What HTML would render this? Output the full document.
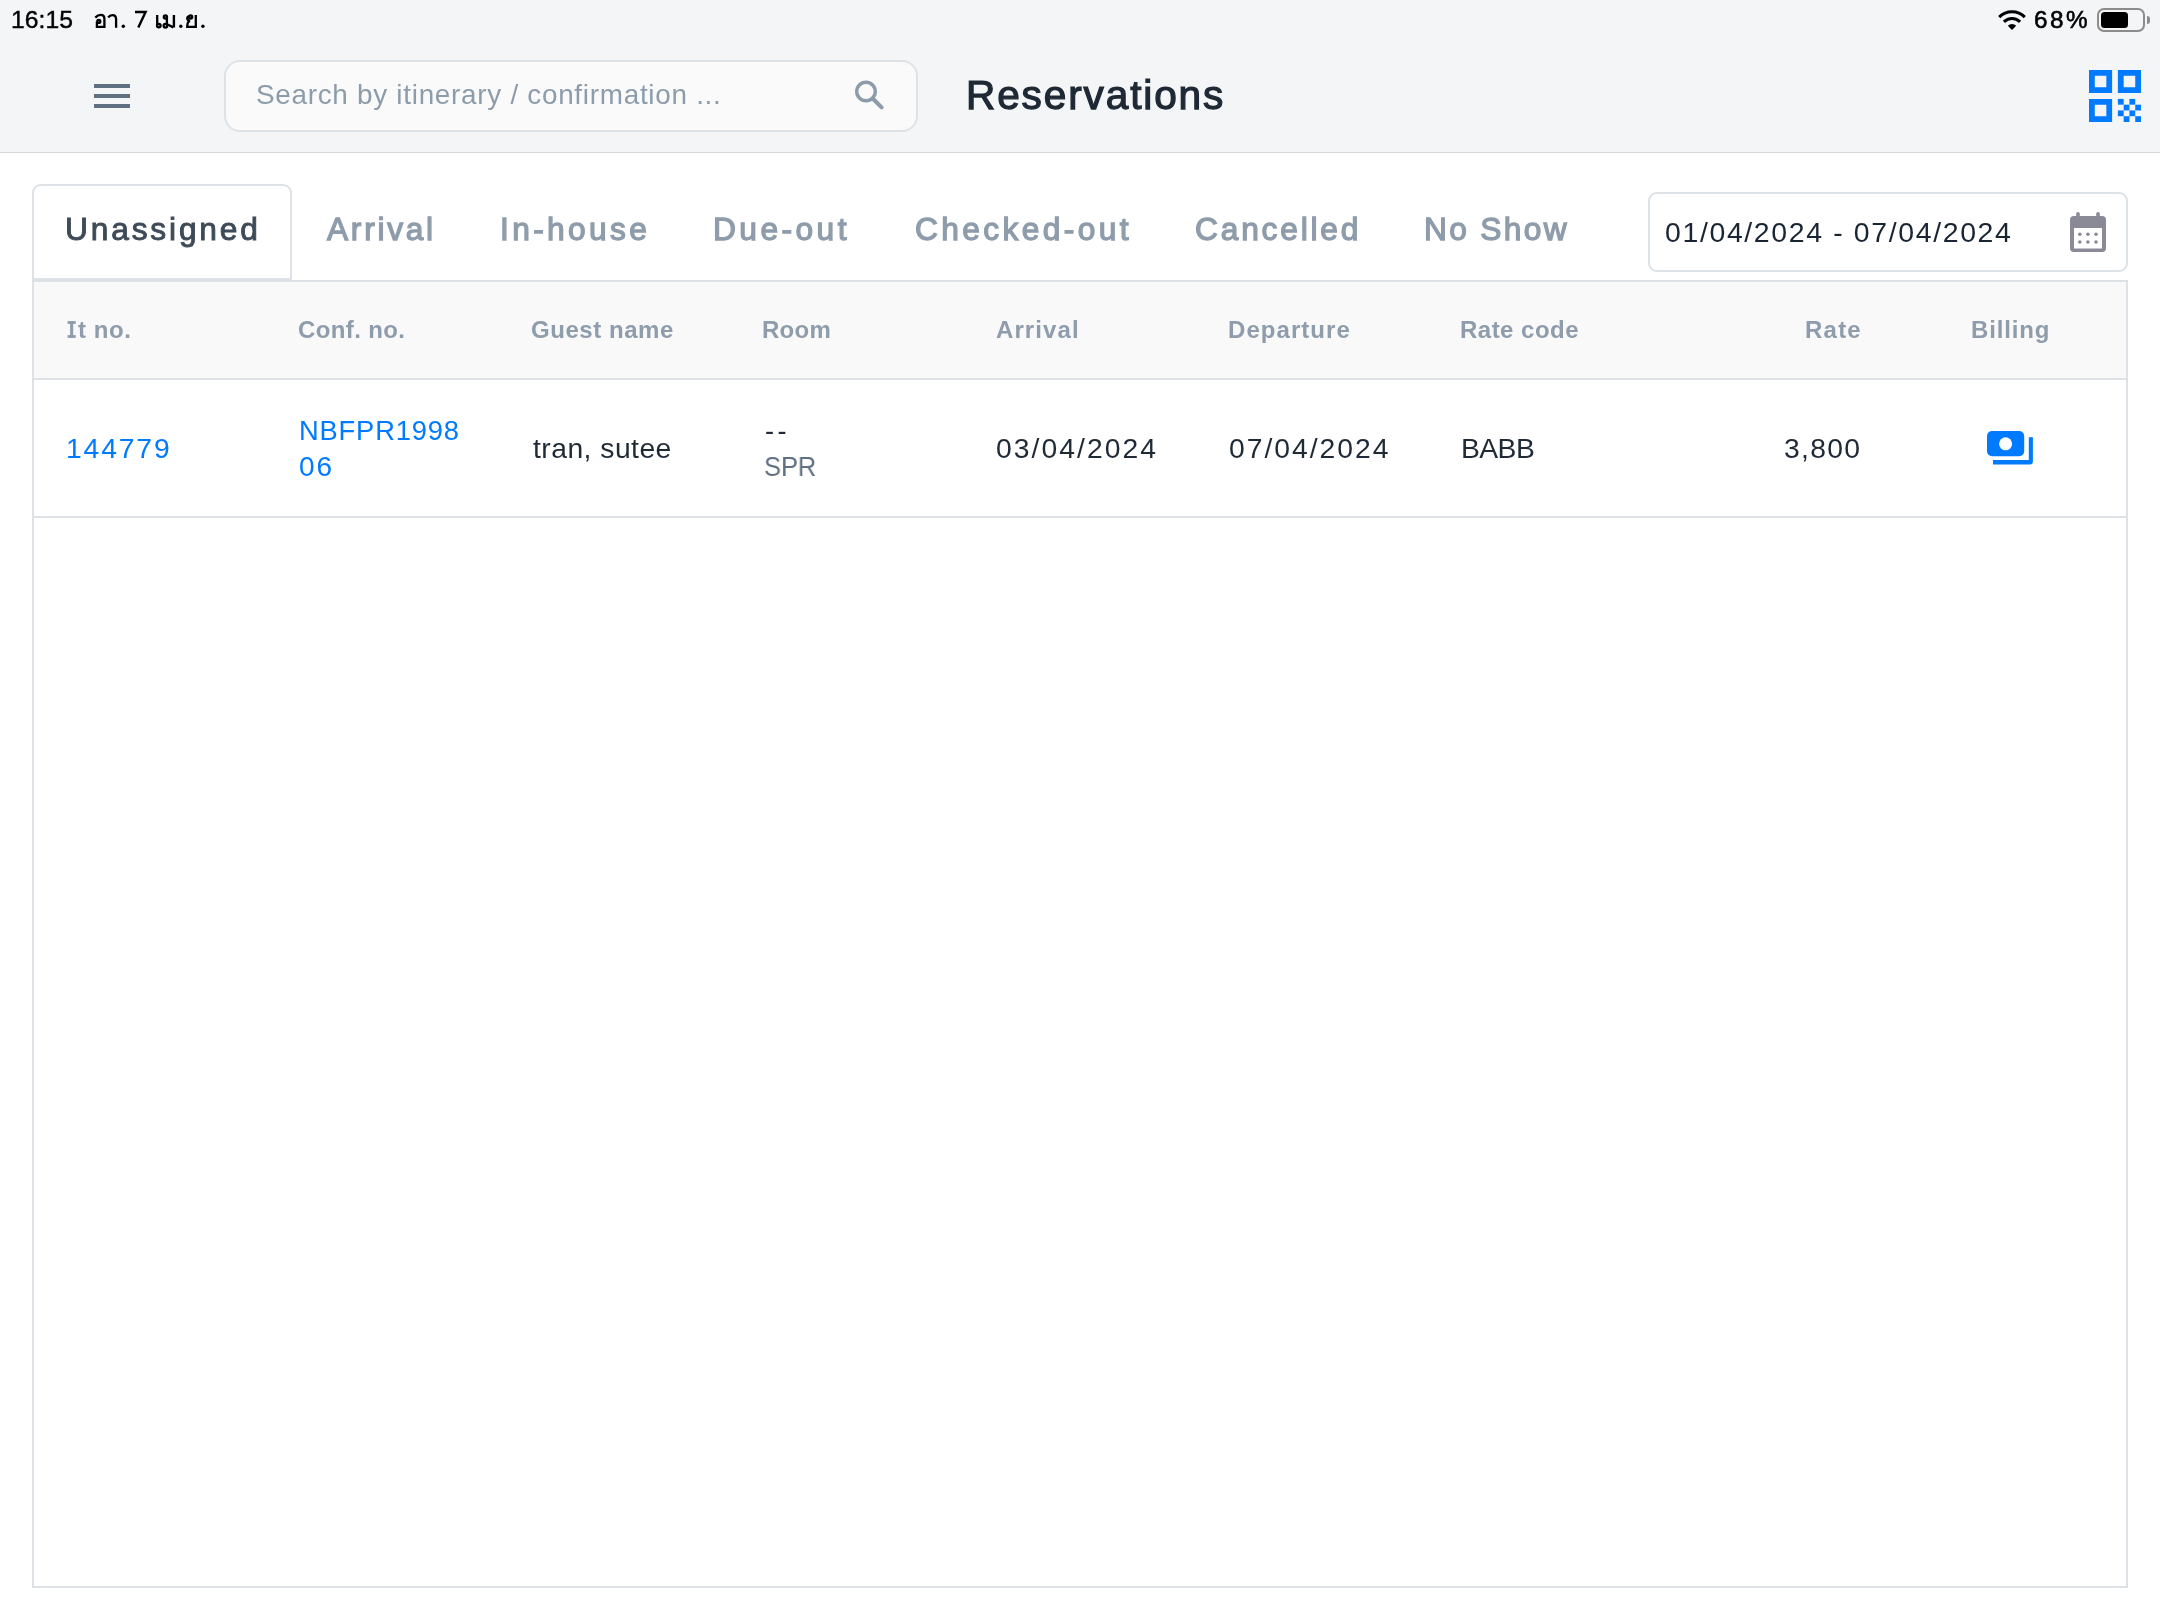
<!DOCTYPE html>
<html><head><meta charset="utf-8"><title>Reservations</title><style>
html,body{margin:0;padding:0;width:2160px;height:1620px;overflow:hidden;background:#fff;font-family:"Liberation Sans",sans-serif}
.t{position:absolute;white-space:pre;line-height:1;will-change:transform}
.a{position:absolute;box-sizing:border-box}
</style></head><body>
<div class="a" style="left:0;top:0;width:2160px;height:152px;background:#f4f5f7"></div>
<div class="a" style="left:0;top:152px;width:2160px;height:1px;background:#d5d7d9"></div>
<div class="a" style="left:94px;top:84px;width:36px;height:4px;background:#617080"></div>
<div class="a" style="left:94px;top:94px;width:36px;height:4px;background:#617080"></div>
<div class="a" style="left:94px;top:104px;width:36px;height:4px;background:#617080"></div>
<div class="a" style="left:224px;top:60px;width:694px;height:72px;border:2px solid #dde2e7;border-radius:16px;background:#fafafa"></div>
<svg class="a" style="left:850px;top:75px" width="40" height="40" viewBox="850 75 40 40"><circle cx="866" cy="91.5" r="9.3" fill="none" stroke="#8d9cab" stroke-width="3.4"/><line x1="873.2" y1="99" x2="881.6" y2="107.4" stroke="#8d9cab" stroke-width="4.1" stroke-linecap="round"/></svg>
<svg class="a" style="left:2089px;top:70px" width="52" height="52" viewBox="0 0 52 52" fill="#007aff"><path d="M0.00 0.00h23.11v23.11h-23.11z M5.78 5.78v11.56h11.56v-11.56z" fill-rule="evenodd"/><path d="M28.89 0.00h23.11v23.11h-23.11z M34.67 5.78v11.56h11.56v-11.56z" fill-rule="evenodd"/><path d="M0.00 28.89h23.11v23.11h-23.11z M5.78 34.67v11.56h11.56v-11.56z" fill-rule="evenodd"/><rect x="28.89" y="28.89" width="5.78" height="5.78"/><rect x="40.44" y="28.89" width="5.78" height="5.78"/><rect x="34.67" y="34.67" width="5.78" height="5.78"/><rect x="46.22" y="34.67" width="5.78" height="5.78"/><rect x="28.89" y="40.44" width="5.78" height="5.78"/><rect x="40.44" y="40.44" width="5.78" height="5.78"/><rect x="34.67" y="46.22" width="5.78" height="5.78"/><rect x="46.22" y="46.22" width="5.78" height="5.78"/></svg>
<div class="t" style="left:10.7px;top:8.0px;font-size:24.71px;font-weight:400;letter-spacing:0.025px;color:#000;-webkit-text-stroke:0.40px #000;">16:15</div>

<div class="t" style="left:2034.3px;top:8.0px;font-size:24.29px;font-weight:400;letter-spacing:2.450px;color:#000;-webkit-text-stroke:0.60px #000;">68%</div>

<svg class="a" style="left:0;top:0" width="220" height="40" viewBox="0 0 220 40" fill="none" stroke="#000" stroke-width="2.3">
<path d="M95.3 17.6 C97.5 15.2 99.5 14.9 100.8 14.9 C103.2 14.9 104.4 16.6 104.4 18.8 V26.9 H96.9 V21.6"/>
<circle cx="98.8" cy="21.4" r="1.5"/>
<path d="M108.2 17.5 C109.6 15.5 111 15.1 112.4 15.1 C114.9 15.1 116.1 16.9 116.1 19.2 V27.8"/>
<path d="M135 12 H145.6 L138.3 27.4" stroke-width="2.4"/>
<path d="M157.2 15 V25.2"/><circle cx="158.8" cy="25.6" r="1.8"/>
<circle cx="165.4" cy="16.9" r="1.6"/><path d="M166.9 17.8 V25.7"/><circle cx="165.4" cy="25.7" r="1.8"/>
<path d="M167 24.2 L173.4 27.4 M173.9 15 V27.4" stroke-width="2.4"/>
<path d="M186.1 26.9 H195.8 V15"/>
<circle cx="190.6" cy="16.9" r="1.6"/>
<path d="M189 16 C186.5 17 186.5 20.6 190 20.8 C187.2 21.5 187.2 24.5 187.3 26.9" />
</svg>
<svg class="a" style="left:0;top:0" width="220" height="40" viewBox="0 0 220 40" fill="#000"><circle cx="123.3" cy="26.3" r="1.7"/><circle cx="180.8" cy="26.3" r="1.7"/><circle cx="202.9" cy="26.3" r="1.7"/></svg>
<svg class="a" style="left:1990px;top:0" width="40" height="40" viewBox="1990 0 40 40">
<path d="M1999.17 17.07 A18.15 18.15 0 0 1 2024.83 17.07" fill="none" stroke="#000" stroke-width="3.1"/>
<path d="M2003.9 21.8 A11.45 11.45 0 0 1 2020.1 21.8" fill="none" stroke="#000" stroke-width="3.1"/>
<path d="M2012 29.9 L2007.8 25.7 A5.9 5.9 0 0 1 2016.2 25.7 Z" fill="#000"/>
</svg>
<div class="a" style="left:2097px;top:8px;width:48px;height:24px;border:2px solid #8c8c8c;border-radius:7px"></div>
<div class="a" style="left:2101px;top:12px;width:27px;height:16px;background:#000;border-radius:3.5px"></div>
<div class="a" style="left:2147px;top:16px;width:3px;height:8px;background:#8c8c8c;border-radius:0 3px 3px 0"></div>
<div class="t" style="left:256.2px;top:80.9px;font-size:27.86px;font-weight:400;letter-spacing:0.719px;color:#8d9cab;">Search by itinerary / confirmation ...</div>

<div class="t" style="left:966.4px;top:75.1px;font-size:40.57px;font-weight:400;letter-spacing:1.873px;color:#1e2935;-webkit-text-stroke:1.25px #1e2935;">Reservations</div>

<div class="a" style="left:32px;top:184px;width:260px;height:98px;border:2px solid #dee2e7;border-radius:9px 9px 0 0;background:#fff"></div>
<div class="t" style="left:64.5px;top:213.7px;font-size:31.71px;font-weight:400;letter-spacing:2.833px;color:#3e4a58;-webkit-text-stroke:0.90px #3e4a58;">Unassigned</div>

<div class="t" style="left:326.6px;top:213.7px;font-size:31.71px;font-weight:400;letter-spacing:2.717px;color:#8e9cab;-webkit-text-stroke:1.30px #8e9cab;">Arrival</div>

<div class="t" style="left:499.9px;top:213.7px;font-size:31.71px;font-weight:400;letter-spacing:3.371px;color:#8e9cab;-webkit-text-stroke:1.30px #8e9cab;">In-house</div>

<div class="t" style="left:712.5px;top:213.7px;font-size:31.71px;font-weight:400;letter-spacing:3.450px;color:#8e9cab;-webkit-text-stroke:1.30px #8e9cab;">Due-out</div>

<div class="t" style="left:914.6px;top:213.7px;font-size:31.71px;font-weight:400;letter-spacing:3.390px;color:#8e9cab;-webkit-text-stroke:1.30px #8e9cab;">Checked-out</div>

<div class="t" style="left:1194.6px;top:213.7px;font-size:31.71px;font-weight:400;letter-spacing:2.800px;color:#8e9cab;-webkit-text-stroke:1.30px #8e9cab;">Cancelled</div>

<div class="t" style="left:1423.6px;top:213.7px;font-size:31.71px;font-weight:400;letter-spacing:2.333px;color:#8e9cab;-webkit-text-stroke:1.30px #8e9cab;">No Show</div>

<div class="a" style="left:1648px;top:192px;width:480px;height:80px;border:2px solid #dde2e7;border-radius:9px;background:#fff"></div>
<div class="t" style="left:1664.9px;top:218.2px;font-size:28.43px;font-weight:400;letter-spacing:1.641px;color:#1a2533;">01/04/2024 - 07/04/2024</div>

<svg class="a" style="left:2070px;top:212px" width="36" height="40" viewBox="0 0 36 40"><rect x="0" y="4" width="36" height="36" rx="4" fill="#8a8a96"/><rect x="4" y="16" width="28" height="20.5" fill="#fff"/><rect x="6.2" y="0" width="3.6" height="6" rx="1.8" fill="#8a8a96"/><rect x="26.2" y="0" width="3.6" height="6" rx="1.8" fill="#8a8a96"/><circle cx="9.8" cy="22.2" r="1.8" fill="#8a8a96"/><circle cx="17.9" cy="22.2" r="1.8" fill="#8a8a96"/><circle cx="26.0" cy="22.2" r="1.8" fill="#8a8a96"/><circle cx="9.8" cy="30.0" r="1.8" fill="#8a8a96"/><circle cx="17.9" cy="30.0" r="1.8" fill="#8a8a96"/><circle cx="26.0" cy="30.0" r="1.8" fill="#8a8a96"/></svg>
<div class="a" style="left:32px;top:280px;width:2096px;height:1308px;border:2px solid #dee2e7;background:#fff"></div>
<div class="a" style="left:34px;top:282px;width:2092px;height:96px;background:#f9f9fa"></div>
<div class="a" style="left:34px;top:378px;width:2092px;height:2px;background:#dee2e7"></div>
<div class="a" style="left:34px;top:516px;width:2092px;height:2px;background:#dee2e7"></div>
<div class="a" style="left:32px;top:278px;width:260px;height:4px;background:#dee2e7"></div>
<div class="t" style="left:78.1px;top:317.9px;font-size:24.00px;font-weight:700;letter-spacing:0.575px;color:#8e9cab;">t no.</div>

<div class="t" style="left:298.3px;top:317.9px;font-size:24.00px;font-weight:700;letter-spacing:0.375px;color:#8e9cab;">Conf. no.</div>

<div class="t" style="left:531.1px;top:317.9px;font-size:24.00px;font-weight:700;letter-spacing:0.544px;color:#8e9cab;">Guest name</div>

<div class="t" style="left:762.4px;top:317.9px;font-size:24.00px;font-weight:700;letter-spacing:0.267px;color:#8e9cab;">Room</div>

<div class="t" style="left:995.6px;top:317.9px;font-size:24.00px;font-weight:700;letter-spacing:1.100px;color:#8e9cab;">Arrival</div>

<div class="t" style="left:1227.6px;top:317.9px;font-size:24.00px;font-weight:700;letter-spacing:1.050px;color:#8e9cab;">Departure</div>

<div class="t" style="left:1460.0px;top:317.9px;font-size:24.00px;font-weight:700;letter-spacing:0.475px;color:#8e9cab;">Rate code</div>

<div class="t" style="left:1805.0px;top:317.9px;font-size:24.00px;font-weight:700;letter-spacing:1.233px;color:#8e9cab;">Rate</div>

<div class="t" style="left:1970.5px;top:317.9px;font-size:24.00px;font-weight:700;letter-spacing:0.833px;color:#8e9cab;">Billing</div>

<svg class="a" style="left:60px;top:315px" width="24" height="28" viewBox="60 315 24 28" fill="#8e9cab"><rect x="67.6" y="321.1" width="8.1" height="2.8"/><rect x="70.1" y="321.1" width="3.1" height="16.7"/><rect x="67.6" y="335.1" width="8.1" height="2.8"/></svg>
<div class="t" style="left:65.8px;top:433.9px;font-size:28.29px;font-weight:400;letter-spacing:1.860px;color:#007aff;">144779</div>

<div class="t" style="left:298.6px;top:417.0px;font-size:27.29px;font-weight:400;letter-spacing:0.850px;color:#007aff;">NBFPR1998</div>

<div class="t" style="left:299.2px;top:452.9px;font-size:28.00px;font-weight:400;letter-spacing:1.900px;color:#007aff;">06</div>

<div class="t" style="left:532.6px;top:434.1px;font-size:28.29px;font-weight:400;letter-spacing:0.470px;color:#1f2a36;">tran, sutee</div>

<div class="t" style="left:764.5px;top:417.0px;font-size:27.29px;font-weight:400;letter-spacing:3.300px;color:#1f2a36;">--</div>

<div class="t" style="left:763.5px;top:452.9px;font-size:28.00px;font-weight:400;letter-spacing:0.000px;color:#5f7080;transform:scaleX(0.9091);transform-origin:0 0;">SPR</div>

<div class="t" style="left:995.6px;top:434.1px;font-size:28.29px;font-weight:400;letter-spacing:2.056px;color:#1f2a36;">03/04/2024</div>

<div class="t" style="left:1228.7px;top:434.1px;font-size:28.29px;font-weight:400;letter-spacing:1.989px;color:#1f2a36;">07/04/2024</div>

<div class="t" style="left:1461.4px;top:434.1px;font-size:28.29px;font-weight:400;letter-spacing:-0.567px;color:#1f2a36;">BABB</div>

<div class="t" style="left:1784.0px;top:434.1px;font-size:28.29px;font-weight:400;letter-spacing:1.325px;color:#1f2a36;">3,800</div>

<svg class="a" style="left:1984px;top:428px" width="52" height="40" viewBox="1984 428 52 40">
<rect x="1987" y="431" width="37.2" height="25.3" rx="5" fill="#007aff"/>
<circle cx="2005.6" cy="443.8" r="6.5" fill="#fff"/>
<path d="M2028.8 437.2 H2032.9 V461.6 Q2032.9 464.6 2029.9 464.6 H1993 V460.1 H2028.8 Z" fill="#007aff"/>
</svg>
</body></html>
